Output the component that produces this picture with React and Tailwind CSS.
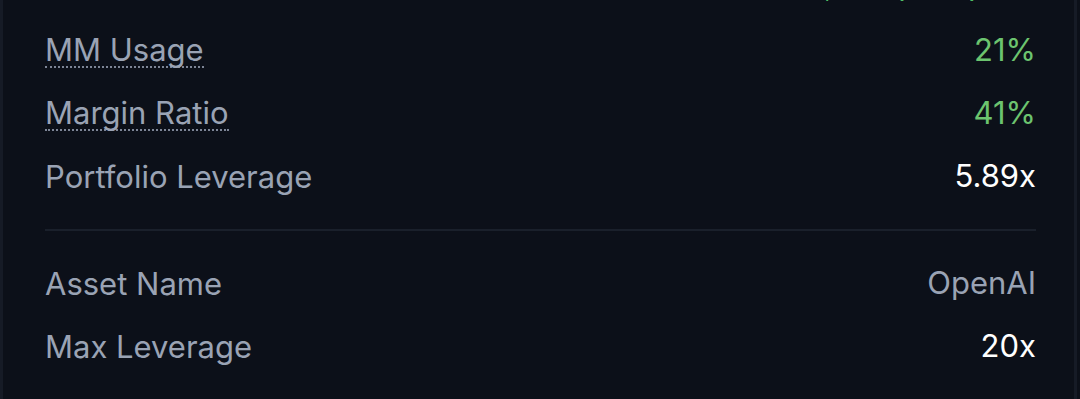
const rows = [
  { label: "MM Usage", value: "21%", tone: "green", hint: true },
  { label: "Margin Ratio", value: "41%", tone: "green", hint: true },
  { label: "Portfolio Leverage", value: "5.89x", tone: "white" },
];

const assetRows = [
  { label: "Asset Name", value: "OpenAI", tone: "muted" },
  { label: "Max Leverage", value: "20x", tone: "white" },
];

function Row({ label, value, tone, hint }) {
  const valueClass =
    tone === "green"
      ? "text-[#6cc46f]"
      : tone === "muted"
      ? "text-[#9aa3b4]"
      : "text-white";
  return (
    <div className="flex h-[63px] shrink-0 items-center justify-between">
      <span
        className={
          hint
            ? "border-b-2 border-dotted border-[#7d8596] leading-[32px] text-[#9aa3b4]"
            : "leading-[32px] text-[#9aa3b4]"
        }
      >
        {label}
      </span>
      <span className={valueClass}>{value}</span>
    </div>
  );
}

export default function App() {
  return (
    <div
      className="h-[399px] w-full overflow-hidden bg-[#0c1019] pr-[3px]"
      style={{ fontFamily: "Inter, 'Noto Sans', sans-serif" }}
    >
      <div className="flex h-full flex-col border-x-[3px] border-[#161b26] pl-[42px] pr-[38px] text-[31px]">
        <div className="-mt-[44px] flex h-[63px] shrink-0 items-center justify-end pr-[56px]">
          <span className="text-[#4fbf67]">$2.4 (+1%)</span>
        </div>
        {rows.map((r) => (
          <Row key={r.label} {...r} />
        ))}
        <div className="my-[21px] h-[2px] shrink-0 bg-[#1a202b]" />
        {assetRows.map((r) => (
          <Row key={r.label} {...r} />
        ))}
      </div>
    </div>
  );
}
